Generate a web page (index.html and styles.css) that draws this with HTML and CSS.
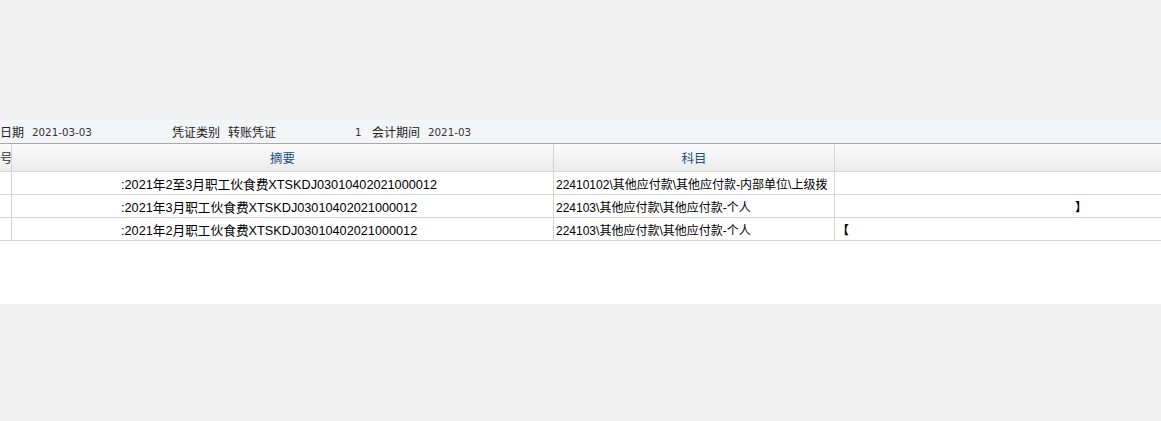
FILE: index.html
```html
<!DOCTYPE html>
<html lang="zh">
<head>
<meta charset="utf-8">
<link rel="stylesheet" href="styles.css">
</head>
<body>
<div class="top-space"></div>
<div class="info-bar">
  <div class="field f-date"><span class="lbl">日期</span><span class="val">2021-03-03</span></div>
  <div class="field f-type"><span class="lbl">凭证类别</span><span class="lbl2">转账凭证</span></div>
  <div class="field f-no"><span class="val">1</span></div>
  <div class="field f-period"><span class="lbl">会计期间</span><span class="val">2021-03</span></div>
</div>
<div class="grid-area">
  <div class="grid">
    <div class="hd c0">号</div>
    <div class="hd c1">摘要</div>
    <div class="hd c2">科目</div>
    <div class="hd c3"></div>

    <div class="cell c0"></div>
    <div class="cell c1"><span class="txt">:2021年2至3月职工伙食费XTSKDJ03010402021000012</span></div>
    <div class="cell c2">22410102\其他应付款\其他应付款-内部单位\上级拨</div>
    <div class="cell c3"></div>

    <div class="cell c0"></div>
    <div class="cell c1"><span class="txt">:2021年3月职工伙食费XTSKDJ03010402021000012</span></div>
    <div class="cell c2">224103\其他应付款\其他应付款-个人</div>
    <div class="cell c3"><span class="br2">】</span></div>

    <div class="cell c0"></div>
    <div class="cell c1"><span class="txt">:2021年2月职工伙食费XTSKDJ03010402021000012</span></div>
    <div class="cell c2">224103\其他应付款\其他应付款-个人</div>
    <div class="cell c3"><span class="br1">【</span></div>
  </div>
</div>
</body>
</html>
```

FILE: styles.css
```css
html, body {
  margin: 0;
  padding: 0;
}
body {
  background: #f0f0f0;
  width: 1161px;
  height: 421px;
  overflow: hidden;
  font-family: "Liberation Sans", "Noto Sans CJK SC", sans-serif;
  color: #000;
}
.top-space {
  height: 120px;
}
.info-bar {
  height: 23px;
  background: #f4f5f7;
  border-bottom: 1px solid #a8a8a8;
  display: flex;
  align-items: center;
  font-size: 12px;
  color: #222;
}
.field {
  display: flex;
  align-items: center;
  white-space: nowrap;
}
.f-date { width: 172px; }
.f-type { width: 183px; }
.f-no { width: 17px; }
.lbl { margin-right: 8px; }
.val {
  font-family: "DejaVu Sans", "Liberation Sans", sans-serif;
  font-size: 10.3px;
  color: #333;
}
.grid-area {
  background: #fff;
  height: 160px;
}
.grid {
  display: grid;
  grid-template-columns: 12px 542px 281px 1fr;
  grid-template-rows: 28px 23px 23px 23px;
}
.hd {
  background: linear-gradient(#fbfbfb, #ececec);
  border-right: 1px solid #d4d4d4;
  border-bottom: 1px solid #d8d8d8;
  display: flex;
  align-items: center;
  justify-content: center;
  font-size: 12.5px;
  color: #24507c;
  box-sizing: border-box;
  overflow: hidden;
}
.hd.c0 {
  justify-content: flex-start;
  color: #333;
  padding-left: 0;
}
.hd.c3 { border-right: none; }
.cell {
  border-right: 1px solid #d4d4d4;
  border-bottom: 1px solid #d4d4d4;
  box-sizing: border-box;
  font-size: 12px;
  display: flex;
  align-items: center;
  white-space: nowrap;
  overflow: hidden;
  padding-left: 2px;
}
.cell.c0 { padding-left: 0; }
.cell.c1 {
  padding-left: 109px;
  font-size: 12.7px;
}
.cell.c3 {
  border-right: none;
}
.br1 {
  font-weight: bold;
}
.br2 {
  margin-left: 238px;
  font-weight: bold;
}
```
